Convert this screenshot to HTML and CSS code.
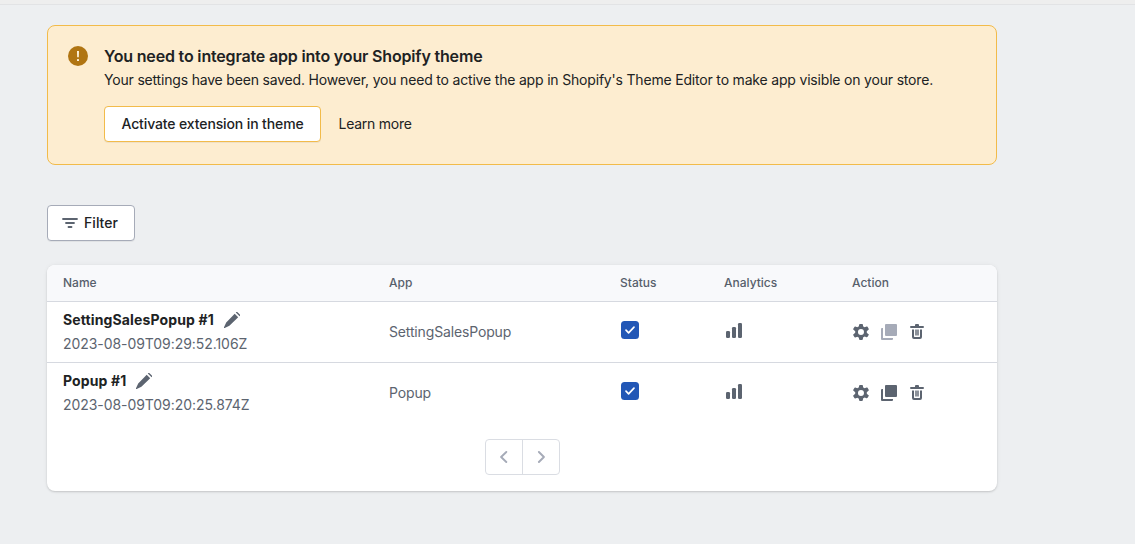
FILE: index.html
```html
<!DOCTYPE html>
<html lang="en">
<head>
<meta charset="utf-8">
<title>Popups</title>
<link rel="stylesheet" href="styles.css">
</head>
<body>
<svg class="sprite" aria-hidden="true">
  <symbol id="pencil" viewBox="0 0 16 16"><path d="M15.600 4.200 11.800.4a1.400 1.400 0 0 1 2 0l1.800 1.800a1.400 1.400 0 0 1 0 2zM10.700 1.800l3.500 3.500L5.400 13.800.700 16a.5.5 0 0 1-.7-.7L2.200 10.600z"/></symbol>
  <symbol id="chart" viewBox="0 0 16 16"><rect x="0" y="8" width="4" height="7" rx="1.200"/><rect x="6" y="4" width="4" height="11" rx="1.200"/><rect x="12" y="0" width="4" height="15" rx="1.200"/></symbol>
  <symbol id="gear" viewBox="2 2 16 16"><path fill-rule="evenodd" d="m17.476 12.230-1.714-1.420c.053-.262.083-.532.083-.81 0-.276-.03-.546-.083-.808l1.714-1.421c.297-.246.387-.663.200-1l-1.094-1.899a.8.8 0 0 0-.958-.327l-2.030.76a5.800 5.800 0 0 0-1.436-.827l-.376-2.130A.8.8 0 0 0 11 2H8.910a.8.8 0 0 0-.78.678l-.36 1.800c-.542.200-1.035.480-1.470.837l-1.953-.7a.8.8 0 0 0-.968.317L2.295 6.750a.8.8 0 0 0 .19 1.002l1.770 1.430a4.200 4.200 0 0 0 0 1.636l-1.770 1.430a.8.8 0 0 0-.19 1.002l1.084 1.818a.8.8 0 0 0 .968.317l1.953-.7c.435.357.928.637 1.470.837l.36 1.800a.8.8 0 0 0 .78.678H11a.8.8 0 0 0 .782-.652l.376-2.130a5.800 5.800 0 0 0 1.436-.827l2.030.76a.8.8 0 0 0 .958-.327l1.094-1.899a.8.8 0 0 0-.2-1zM9.980 13a3 3 0 1 1 0-6 3 3 0 0 1 0 6z"/></symbol>
  <symbol id="copy" viewBox="0 0 16 16"><rect x="4" width="12" height="12" rx="1"/><path d="M0 5a1 1 0 0 1 1-1h1v10h10v1a1 1 0 0 1-1 1H1a1 1 0 0 1-1-1z"/></symbol>
  <symbol id="trash" viewBox="0 0 16 16"><path d="M6 2V1a1 1 0 0 1 1-1h2a1 1 0 0 1 1 1v1h4a1 1 0 0 1 0 2H2a1 1 0 0 1 0-2zM3 5.500h2v7c0 .3.200.5.500.5h5c.3 0 .5-.2.500-.5v-7h2v7.500a2 2 0 0 1-2 2H5a2 2 0 0 1-2-2zM6.300 5.500h1.400v6H6.300zM8.300 5.500h1.400v6H8.300z"/></symbol>
  <symbol id="check" viewBox="0 0 18 18"><path d="m5 9.200 2.600 2.600L13 6.200" fill="none" stroke="#fff" stroke-width="1.700" stroke-linecap="round" stroke-linejoin="round"/></symbol>
</svg>
<div class="topbar"></div>
<main class="page">
  <section class="banner">
    <svg class="banner-icon" viewBox="0 0 20 20"><circle cx="10" cy="10" r="10" fill="#b07512"/><path d="M9 5h2l-.2 6.300H9.200z" fill="#fdf3dc"/><rect x="9" y="13" width="2" height="2" rx=".6" fill="#fdf3dc"/></svg>
    <div>
      <h2 class="banner-title">You need to integrate app into your Shopify theme</h2>
      <p class="banner-text">Your settings have been saved. However, you need to active the app in Shopify's Theme Editor to make app visible on your store.</p>
      <div class="banner-actions">
        <button class="btn btn-banner">Activate extension in theme</button>
        <a class="learn">Learn more</a>
      </div>
    </div>
  </section>

  <button class="btn btn-filter"><svg class="filter-icon" viewBox="0 0 16 10"><path d="M1 1h14M4 5h8M6.500 9h3" fill="none" stroke="#5c6470" stroke-width="1.800" stroke-linecap="round"/></svg>Filter</button>

  <section class="card">
    <table class="table">
      <colgroup><col class="c-name"><col class="c-app"><col class="c-status"><col class="c-analytics"><col></colgroup>
      <thead><tr><th>Name</th><th>App</th><th>Status</th><th>Analytics</th><th>Action</th></tr></thead>
      <tbody>
        <tr>
          <td><div class="name">SettingSalesPopup #1<svg class="icon"><use href="#pencil"/></svg></div><div class="date">2023-08-09T09:29:52.106Z</div></td>
          <td>SettingSalesPopup</td>
          <td><svg class="checkbox"><use href="#check"/></svg></td>
          <td><svg class="icon chart"><use href="#chart"/></svg></td>
          <td><div class="actions"><svg class="icon"><use href="#gear"/></svg><svg class="icon disabled"><use href="#copy"/></svg><svg class="icon"><use href="#trash"/></svg></div></td>
        </tr>
        <tr>
          <td><div class="name">Popup #1<svg class="icon"><use href="#pencil"/></svg></div><div class="date">2023-08-09T09:20:25.874Z</div></td>
          <td>Popup</td>
          <td><svg class="checkbox"><use href="#check"/></svg></td>
          <td><svg class="icon chart"><use href="#chart"/></svg></td>
          <td><div class="actions"><svg class="icon"><use href="#gear"/></svg><svg class="icon"><use href="#copy"/></svg><svg class="icon"><use href="#trash"/></svg></div></td>
        </tr>
      </tbody>
    </table>
    <nav class="pager">
      <span class="page-btn"><svg class="chev" viewBox="0 0 8 12"><path d="M6.300 1 1.100 6l5.200 5"/></svg></span>
      <span class="page-btn"><svg class="chev" viewBox="0 0 8 12"><path d="m1.900 1 5 5-5 5"/></svg></span>
    </nav>
  </section>
</main>
</body>
</html>
```
FILE: styles.css
```css
* { box-sizing: border-box; }
body {
  margin: 0;
  height: 544px;
  overflow: hidden;
  background: #edeff1;
  color: #202223;
  font: 400 14px/20px Inter, "Liberation Sans", sans-serif;
}
.sprite { display: none; }
.topbar { height: 5px; background: #eee; border-bottom: 1px solid #e2e3e5; }
.page { width: 950px; margin: 20px 0 0 47px; }

.banner {
  display: flex;
  gap: 16px;
  height: 140px;
  padding: 20px;
  background: #fdedd0;
  border: 1px solid #f2bb4a;
  border-radius: 8px;
}
.banner-icon { width: 20px; height: 20px; flex: none; }
.banner-title { margin: 0; font-size: 16px; line-height: 20px; font-weight: 600; letter-spacing: -.17px; }
.banner-text { margin: 4px 0 0; white-space: nowrap; letter-spacing: -.186px; }
.banner-actions { display: flex; align-items: center; gap: 17.5px; margin-top: 16px; }
.learn { letter-spacing: -.25px; }

.btn {
  display: flex;
  align-items: center;
  justify-content: center;
  height: 36px;
  padding: 0;
  background: #fff;
  border-radius: 4px;
  color: #202223;
  font: 500 14px/20px Inter, "Liberation Sans", sans-serif;
  box-shadow: 0 1px 0 rgba(0, 0, 0, .05);
}
.btn-banner { width: 217px; border: 1px solid #f2bb4a; letter-spacing: -.12px; }
.btn-filter { width: 88px; margin-top: 40px; padding-right: 2px; gap: 6px; border: 1px solid #a6abb8; }
.filter-icon { width: 16px; height: 10px; }

.card {
  height: 226px;
  margin-top: 24px;
  background: #fff;
  border-radius: 8px;
  overflow: hidden;
  box-shadow: 0 0 5px rgba(23, 24, 24, .05), 0 1px 2px rgba(0, 0, 0, .15);
}
.table { width: 100%; table-layout: fixed; border-spacing: 0; }
.c-name { width: 326px; }
.c-app { width: 231px; }
.c-status { width: 104px; }
.c-analytics { width: 128px; }
th {
  height: 37px;
  padding: 0 16px 1px;
  background: #f8f9fb;
  border-bottom: 1px solid #d6d9e0;
  color: #575f6b;
  font-size: 12px;
  line-height: 16px;
  font-weight: 500;
  text-align: left;
}
td { height: 61px; padding: 0 16px; color: #5c646f; letter-spacing: -.15px; }
tbody tr:first-child td { border-bottom: 1px solid #d6d9e0; }
tbody tr:last-child td { padding-bottom: 1px; }
.name { display: flex; align-items: center; gap: 10px; margin-bottom: 4px; color: #202223; font-weight: 700; letter-spacing: .13px; }
.date { letter-spacing: -.06px; }
.icon { display: block; width: 16px; height: 16px; fill: #5c6470; }
.chart { margin: -1px 0 1px 2px; }
.checkbox { display: block; width: 18px; height: 18px; margin: -2px 0 2px 1px; background: #2257b6; border-radius: 3.5px; }
.actions { display: flex; gap: 12px; margin-left: 1px; }
.disabled { fill: #a6abb8; }

.pager {
  display: flex;
  width: 75px;
  height: 36px;
  margin: 15px 0 0 438px;
  border: 1px solid #dadde3;
  border-radius: 4px;
}
.page-btn { flex: 1; display: grid; place-items: center; }
.page-btn + .page-btn { border-left: 1px solid #dadde3; }
.chev { width: 8px; height: 12px; fill: none; stroke: #a6abb8; stroke-width: 1.9; stroke-linecap: round; stroke-linejoin: round; }
```
